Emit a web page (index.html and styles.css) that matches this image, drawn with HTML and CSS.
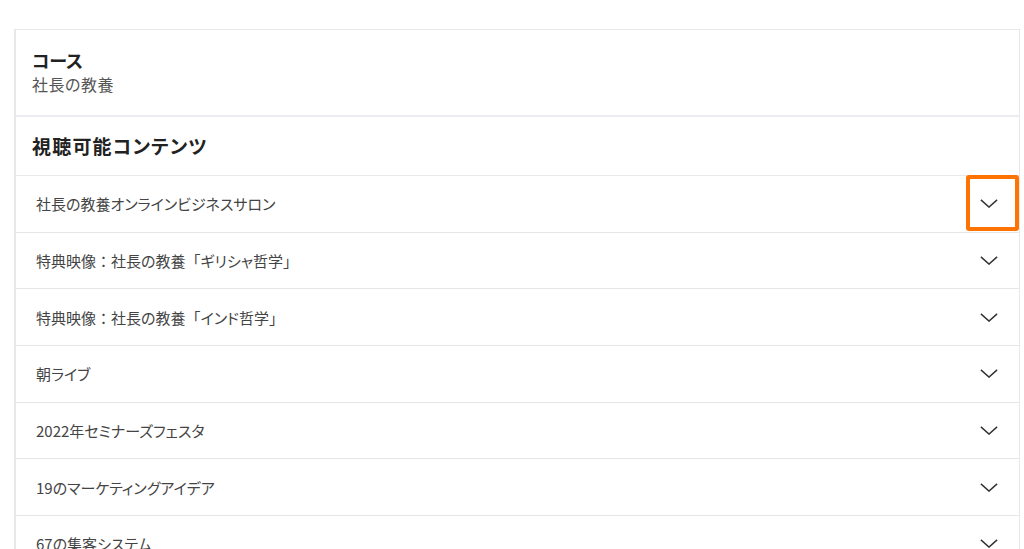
FILE: index.html
```html
<!DOCTYPE html>
<html lang="ja">

<head>
    <meta charset="UTF-8">
    <meta name="viewport" content="width=device-width, initial-scale=1.0">
    <title>コース</title>
    <link rel="stylesheet" href="styles.css">
</head>

<body>
    <div class="page">
        <div class="panel">
            <div class="course-head">
                <div class="course-label">コース</div>
                <div class="course-name">社長の教養</div>
            </div>

            <div class="section-title">視聴可能コンテンツ</div>

            <ul class="content-list">
                <li class="content-item">
                    <span>社長の教養オンラインビジネスサロン</span>
                    <svg class="chevron" viewBox="0 0 20 10"><path d="M1 1 L10 9 L19 1" /></svg>
                    <!-- focus frame -->
                    <span class="highlight-box"></span>
                </li>
                <li class="content-item">
                    <span>特典映像<span class="wide">：</span>社長の教養<span class="wide">「</span>ギリシャ哲学<span class="wide">」</span></span>
                    <svg class="chevron" viewBox="0 0 20 10"><path d="M1 1 L10 9 L19 1" /></svg>
                </li>
                <li class="content-item">
                    <span>特典映像<span class="wide">：</span>社長の教養<span class="wide">「</span>インド哲学<span class="wide">」</span></span>
                    <svg class="chevron" viewBox="0 0 20 10"><path d="M1 1 L10 9 L19 1" /></svg>
                </li>
                <li class="content-item">
                    <span>朝ライブ</span>
                    <svg class="chevron" viewBox="0 0 20 10"><path d="M1 1 L10 9 L19 1" /></svg>
                </li>
                <li class="content-item">
                    <span>2022年セミナーズフェスタ</span>
                    <svg class="chevron" viewBox="0 0 20 10"><path d="M1 1 L10 9 L19 1" /></svg>
                </li>
                <li class="content-item">
                    <span>19のマーケティングアイデア</span>
                    <svg class="chevron" viewBox="0 0 20 10"><path d="M1 1 L10 9 L19 1" /></svg>
                </li>
                <li class="content-item">
                    <span>67の集客システム</span>
                    <svg class="chevron" viewBox="0 0 20 10"><path d="M1 1 L10 9 L19 1" /></svg>
                </li>
            </ul>
        </div>
    </div>
</body>

</html>
```

FILE: styles.css
```css
body {
    margin: 0;
    padding: 0;
    background-color: white;
    font-family: "Noto Sans CJK JP", "Noto Sans", sans-serif;
    font-feature-settings: "palt";
    color: #333;
    overflow: hidden;
}

.page {
    padding: 29px 4px 0 14px;
}

.panel {
    border: 1px solid #e8e8ec;
    border-bottom: none;
    border-left-width: 2px;
}

.course-head {
    padding: 17px 18px 20px 16px;
    border-bottom: 2px solid #ececf0;
}

.course-label {
    font-size: 18px;
    font-weight: bold;
    color: #222;
    line-height: 26px;
}

.course-name {
    font-size: 16px;
    color: #555;
    line-height: 22px;
    letter-spacing: 0.5px;
}

.section-title {
    height: 58px;
    line-height: 58px;
    padding-left: 16px;
    font-size: 19px;
    font-weight: bold;
    color: #222;
    letter-spacing: 1.2px;
    border-bottom: 1px solid #e8e8ec;
}

.content-list {
    list-style: none;
    margin: 0;
    padding: 0;
}

.content-item {
    position: relative;
    box-sizing: border-box;
    height: 56.67px;
    display: flex;
    align-items: center;
    justify-content: space-between;
    padding: 0 21px 0 20px;
    font-size: 15px;
    color: #444;
    border-bottom: 1px solid #e6e6ea;
}

/* full-width punctuation keeps its box */
.wide {
    font-feature-settings: normal;
}

.chevron {
    width: 18px;
    height: 9px;
    fill: none;
    stroke: #333;
    stroke-width: 1.6px;
}

.highlight-box {
    position: absolute;
    top: -1px;
    right: 0;
    width: 53px;
    height: 56px;
    box-sizing: border-box;
    border: 4px solid #ff7300;
    border-radius: 3px;
}
```
